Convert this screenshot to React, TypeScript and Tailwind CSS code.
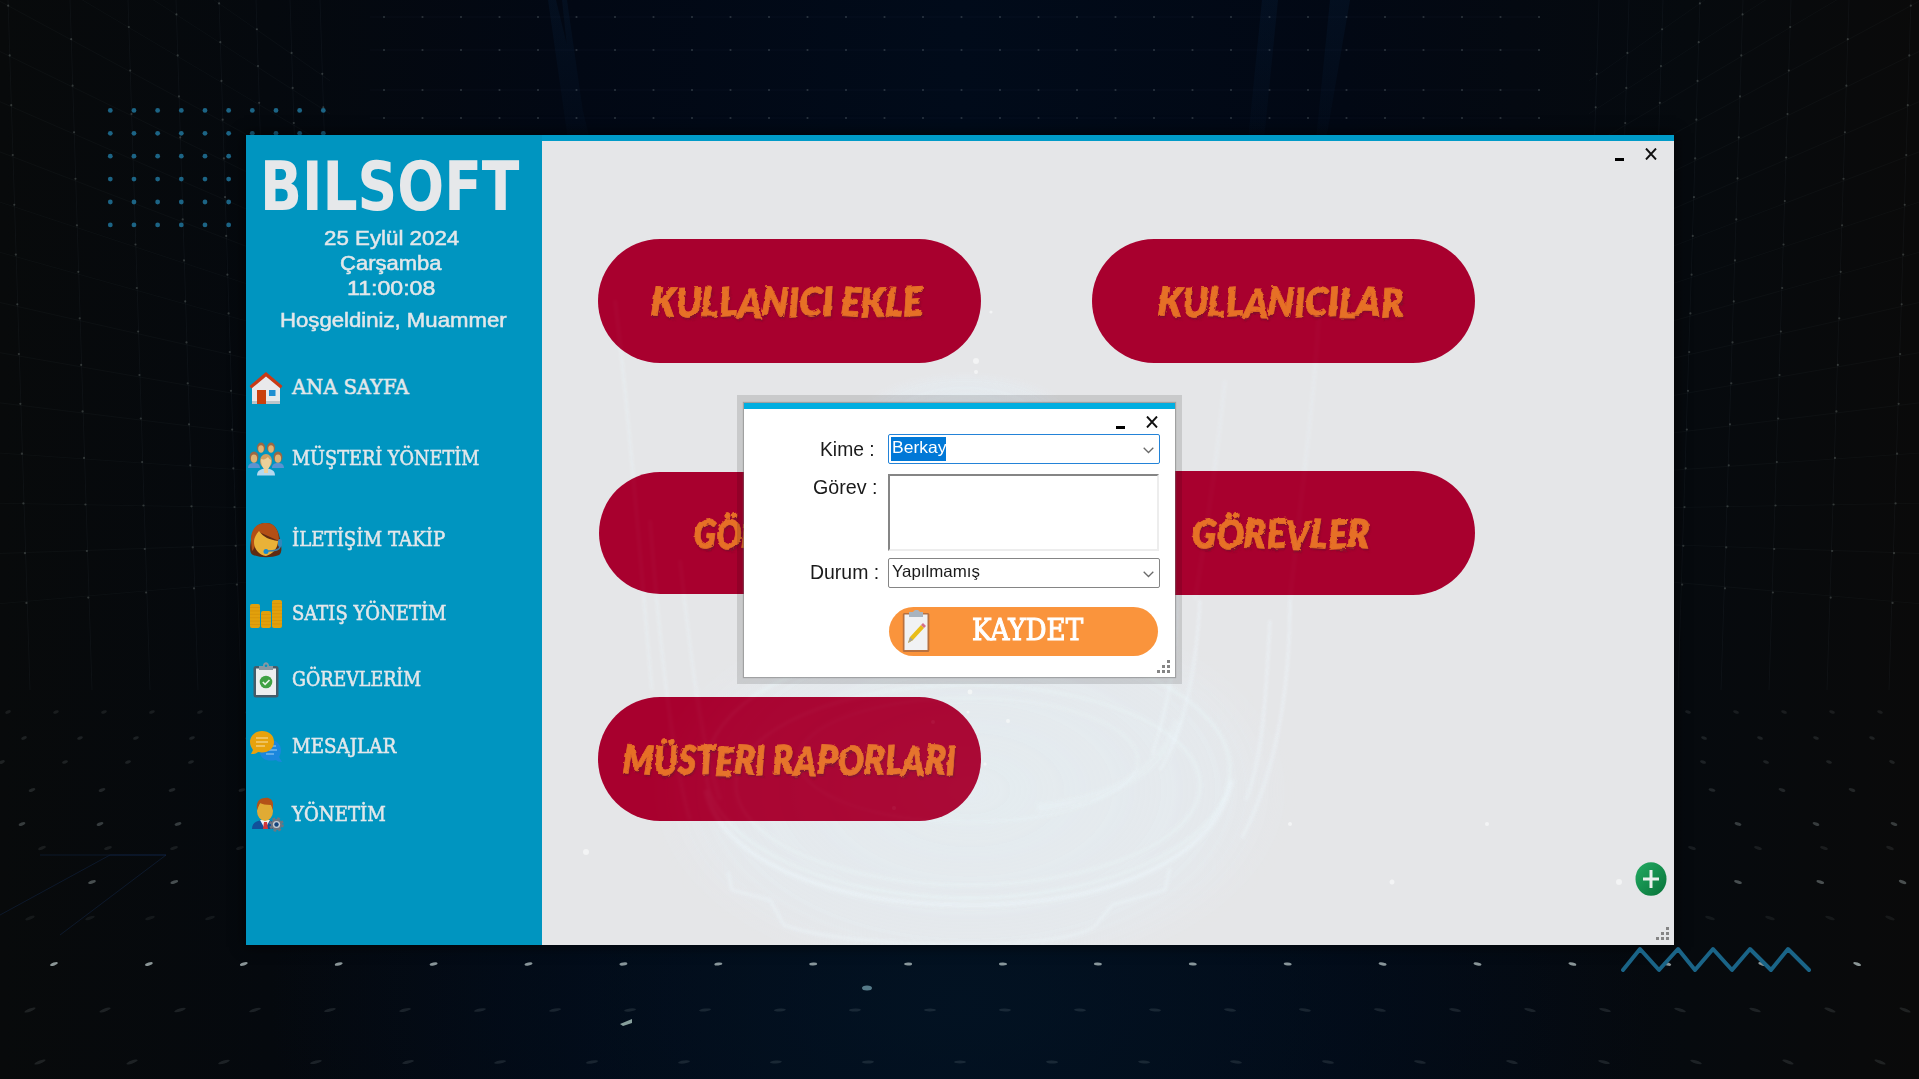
import React, { useLayoutEffect, useRef, useState } from "react";

const range = (n: number) => Array.from({ length: n }, (_, i) => i);

/** Stretches a single line of text horizontally to a given width. */
function Fit({ width, className = "", children }: { width: number; className?: string; children: React.ReactNode }) {
  const ref = useRef<HTMLSpanElement>(null);
  const [scale, setScale] = useState(1);
  useLayoutEffect(() => {
    if (ref.current) setScale(width / ref.current.offsetWidth);
  }, [width]);
  return (
    <span className="block shrink-0" style={{ width }}>
      <span
        ref={ref}
        className={`inline-block origin-left align-top whitespace-nowrap ${className}`}
        style={{ transform: `scaleX(${scale})` }}
      >
        {children}
      </span>
    </span>
  );
}

/* ---------- backdrop ---------- */

const VX = 960;
const VY = 520;
const wallX = [8, 70, 128, 176, 219, 256, 290, 320];

function Wall() {
  return (
    <g>
      {wallX.map((x) => (
        <path key={x} d={`M${x} 0 L${x + 22} 690`} stroke="#8aa0a8" strokeOpacity=".06" />
      ))}
      {range(16).map((k) => {
        const y = -60 + k * 43.5;
        const at = (x: number) => y + ((x - 128) * (VY - y)) / (VX - 128);
        return (
          <g key={k}>
            <path d={`M0 ${at(0)} L330 ${at(330)}`} stroke="#8aa0a8" strokeOpacity=".045" />
            {wallX.map((x) => {
              const yy = at(x);
              return <circle key={x} cx={x + (22 * yy) / 720} cy={yy} r="1.1" fill="#b8c4bc" fillOpacity=".24" />;
            })}
          </g>
        );
      })}
    </g>
  );
}

const floorRows = [
  { y: 712, x: 8, step: 48, r: 3, o: 0.1 },
  { y: 738, x: 24, step: 56, r: 3, o: 0.12 },
  { y: 762, x: 2, step: 63, r: 3, o: 0.12 },
  { y: 790, x: 32, step: 70, r: 3.5, o: 0.14 },
  { y: 824, x: 22, step: 78, r: 3.5, o: 0.25 },
  { y: 848, x: 42, step: 66, r: 4, o: 0.1 },
  { y: 882, x: 92, step: 82.3, r: 4, o: 0.35 },
  { y: 918, x: 30, step: 60, r: 5, o: 0.08 },
  { y: 964, x: 54, step: 94.9, r: 4, o: 0.7 },
  { y: 1010, x: 30, step: 75, r: 6, o: 0.12 },
  { y: 1062, x: 40, step: 92, r: 6, o: 0.12 },
];

function FloorSpecks() {
  return (
    <g>
      {floorRows.map((row) =>
        range(42).map((i) => {
          const x = row.x + i * row.step;
          if (x > 1919) return null;
          const tilt = ((960 - x) / 960) * -22;
          return (
            <ellipse
              key={`${row.y}-${i}`}
              cx={x}
              cy={row.y}
              rx={row.r}
              ry="1.5"
              fill="#c3d2d2"
              fillOpacity={row.o}
              transform={`rotate(${tilt} ${x} ${row.y})`}
            />
          );
        }),
      )}
    </g>
  );
}

function Backdrop() {
  return (
    <svg className="absolute inset-0" width="1919" height="1079" viewBox="0 0 1919 1079">
      <defs>
        <linearGradient id="base" x1="0" x2="1">
          <stop offset="0" stopColor="#080a0b" />
          <stop offset=".14" stopColor="#05090e" />
          <stop offset=".3" stopColor="#020814" />
          <stop offset=".5" stopColor="#010b1a" />
          <stop offset=".7" stopColor="#020814" />
          <stop offset=".88" stopColor="#060a0e" />
          <stop offset="1" stopColor="#0a0a0a" />
        </linearGradient>
        <radialGradient id="floor" cx=".5" cy=".93" r=".36">
          <stop offset="0" stopColor="#031424" stopOpacity=".8" />
          <stop offset="1" stopColor="#031424" stopOpacity="0" />
        </radialGradient>
        <linearGradient id="beam" x1="0" y1="0" x2="0" y2="1">
          <stop offset="0" stopColor="#0b2f55" stopOpacity=".18" />
          <stop offset="1" stopColor="#0b2f55" stopOpacity=".06" />
        </linearGradient>
      </defs>
      <rect width="1919" height="1079" fill="url(#base)" />
      <rect width="1919" height="1079" fill="url(#floor)" />
      <path d="M548 0h8l34 140h-22z M562 0h5l20 140h-10z M1262 0h16l-14 140h-16z M1330 0h20l-24 140h-10z" fill="url(#beam)" />
      <Wall />
      <g transform="translate(1919 0) scale(-1 1)">
        <Wall />
      </g>
      <g>
        {[17, 50, 90, 118].map((y) => (
          <g key={y}>
            <path d={`M370 ${y}H1540`} stroke="#6f8c9c" strokeOpacity=".05" />
            {range(31).map((i) => (
              <circle key={i} cx={384 + i * 38.5} cy={y} r="1.1" fill="#b8c8c8" fillOpacity=".22" />
            ))}
          </g>
        ))}
      </g>
      <FloorSpecks />
      <path d="M0 915 L110 855 H166 M40 855 H166 L60 935" fill="none" stroke="#16305a" strokeOpacity=".4" />
      <ellipse cx="867" cy="988" rx="5" ry="2.5" fill="#79a7b5" fillOpacity=".7" />
      <path d="M620 1024 l12 -5 v4 l-9 3z" fill="#a9c4bd" fillOpacity=".8" />
      <g fill="#1c6485">
        {range(6).map((r) => range(10).map((c) => <circle key={`${r}-${c}`} cx={110.3 + c * 23.67} cy={110.4 + r * 22.9} r="2.4" />))}
      </g>
    </svg>
  );
}

/** Pale glass-like vortex of the main pane, in the pane's own 1132x804 space. */
function Vortex({ className }: { className: string }) {
  return (
    <svg className={`pointer-events-none absolute inset-0 ${className}`} width="1132" height="804" viewBox="542 141 1132 804">
      <defs>
        <radialGradient id="haze">
          <stop offset="0" stopColor="#e4f6fd" stopOpacity=".4" />
          <stop offset=".75" stopColor="#e4f6fd" stopOpacity=".22" />
          <stop offset="1" stopColor="#e4f6fd" stopOpacity="0" />
        </radialGradient>
        <filter id="soft">
          <feGaussianBlur stdDeviation="1.4" />
        </filter>
      </defs>
      <ellipse cx="970" cy="790" rx="330" ry="200" fill="url(#haze)" />
      <ellipse cx="965" cy="415" rx="110" ry="45" fill="url(#haze)" />
      <g filter="url(#soft)" fill="none" stroke="#effbff">
        <ellipse cx="968" cy="770" rx="262" ry="128" strokeWidth="3" strokeOpacity=".35" />
        <ellipse cx="968" cy="785" rx="232" ry="100" strokeWidth="3" strokeOpacity=".3" />
        <ellipse cx="968" cy="760" rx="170" ry="62" strokeWidth="2" strokeOpacity=".3" />
        <path d="M706 790 C720 860 830 905 968 905 C1110 905 1215 860 1232 780" strokeWidth="5" strokeOpacity=".4" />
        <path d="M728 872 L732 890 L770 900 L784 925 C850 950 1070 952 1096 925 L1112 905 L1165 890 L1170 868" strokeWidth="3" strokeOpacity=".4" />
        <path d="M1037 808 C1110 800 1165 770 1178 720" strokeWidth="9" strokeOpacity=".2" />
        <path d="M1178 590 C1176 660 1170 700 1152 755 M1200 600 C1196 680 1180 740 1160 770 M1290 600 C1290 700 1272 780 1242 838 M1270 620 C1266 700 1262 760 1246 800" strokeWidth="3" strokeOpacity=".4" />
        <path d="M650 520 C660 650 672 760 690 820 M680 560 C690 650 700 740 720 800 M615 300 C630 420 640 560 652 690" strokeWidth="4" strokeOpacity=".22" />
        <path d="M1225 380 C1218 450 1205 540 1195 600 M1320 280 C1318 380 1300 500 1290 600" strokeWidth="5" strokeOpacity=".16" />
      </g>
      <g fill="#fff">
        {[[976, 361, 3], [976, 372, 2], [991, 312, 1.6], [905, 312, 1.6], [970, 692, 2.4], [933, 722, 2], [968, 712, 1.5], [1008, 721, 2], [894, 808, 2], [985, 764, 1.6], [586, 852, 3], [1619, 882, 3], [1392, 882, 2.5], [1487, 824, 2], [1290, 824, 2]].map(([x, y, r]) => (
          <circle key={`${x}-${y}`} cx={x} cy={y} r={r} fillOpacity=".55" />
        ))}
      </g>
    </svg>
  );
}

/* ---------- sidebar icons ---------- */

const HouseIcon = () => (
  <svg width="34" height="34" viewBox="0 0 34 34">
    <path d="M17 3 L31 16 V33 H3 V16z" fill="#e9e9eb" />
    <path d="M3 30h28v3H3z" fill="#bcc5ca" />
    <path d="M17 1 L33.500 15 L31.500 17.500 L17 5.500 L2.500 17.500 L.5 15z" fill="#c93a16" />
    <rect x="8" y="19" width="9" height="14" fill="#ca410d" />
    <rect x="20" y="19" width="6.500" height="6" fill="#218fd1" />
  </svg>
);

const Head = ({ x, y, s = 1 }: { x: number; y: number; s?: number }) => (
  <g transform={`translate(${x} ${y}) scale(${s})`}>
    <ellipse cy="0" rx="4" ry="5" fill="#9a6844" />
    <ellipse cy="1.500" rx="2.800" ry="3.700" fill="#e0b374" />
  </g>
);

const PeopleIcon = () => (
  <svg width="36" height="34" viewBox="0 0 36 34">
    <Head x={13} y={5.500} />
    <Head x={23} y={5.500} />
    <path d="M0 26c0-4 3-5 6-5s6 1 6 5z M24 26c0-4 3-5 6-5s6 1 6 5z" fill="#5a93d2" />
    <Head x={6} y={15} s={1.100} />
    <Head x={30} y={15} s={1.100} />
    <path d="M9 33.500c0-5 4-7 9-7s9 2 9 7z" fill="#b5d8ee" />
    <ellipse cx="18" cy="19" rx="6" ry="7" fill="#cf9f61" />
    <path d="M13 17c3 1 5 0 7-2 1 2 2 2 3 3 0 5-2 8-3 9v4h-4v-4c-2-2-3-5-3-10z" fill="#ecd09a" />
  </svg>
);

const AgentIcon = () => (
  <svg width="34" height="36" viewBox="0 0 34 36">
    <path d="M17 1C7 1 3 9 2 18 1 25 0 31 4 33c8 3 18 3 26 0 4-3 2-10 1-16C29 7 25 1 17 1z" fill="#5f2b12" />
    <path d="M17 1C6 1 2 9 2 18l1 11c4-3 4-14 7-19l20 9C30 8 26 1 17 1z" fill="#b34f16" />
    <path d="M10 9c4 6 11 9 19 10 0 7-5 13-12 15C10 33 5 27 5 20c0-4 2-8 5-11z" fill="#e9b238" />
    <path d="M31 17v8q-1 4-12 4" fill="none" stroke="#3e7fa7" strokeWidth="1.500" />
    <rect x="29" y="17" width="4" height="8" rx="2" fill="#3188bc" />
    <circle cx="17" cy="29.500" r="2.500" fill="#168bd0" />
  </svg>
);

const CoinsIcon = () => (
  <svg width="34" height="30" viewBox="0 0 34 30">
    {[[1, 5, 24], [12, 12, 17], [23, 1, 28]].map(([x, y, h]) => (
      <g key={x}>
        <rect x={x} y={y} width="10" height={h} rx="2" fill="#e2a00c" />
        {range(Math.floor(h / 3.4) - 1).map((i) => (
          <path key={i} d={`M${x} ${y + 3.5 + i * 3.4}h10`} stroke="#cf8a09" strokeWidth=".5" />
        ))}
      </g>
    ))}
  </svg>
);

const TasksIcon = () => (
  <svg width="34" height="36" viewBox="0 0 34 36">
    <rect x="4.500" y="4" width="25" height="31.500" rx="2.500" fill="#465b68" />
    <rect x="7" y="6.500" width="20" height="26.500" fill="#eceeef" />
    <path d="M10 4h4c0-5 6-5 6 0h4v4H10z" fill="#8898a2" />
    <circle cx="17" cy="3.800" r="1.300" fill="#0095c0" />
    <circle cx="17" cy="20" r="6.300" fill="#3fa143" />
    <path d="M13.800 20l2.300 2.300 4.400-4.300" fill="none" stroke="#e9f5e9" strokeWidth="1.600" />
  </svg>
);

const ChatIcon = () => (
  <svg width="34" height="34" viewBox="0 0 34 34">
    <path d="M21 10c7 0 11 5 11 10 0 3-1 5-2 7l3 5c-3 0-5-1-6-2-9 2-15-1-16-7z" fill="#1b87dd" />
    <path d="M21 16h6M20 20h8M17 24h8" stroke="#9fd0f3" strokeWidth="1.200" />
    <path d="M13 1C6 1 1 6 1 12c0 4 2 6 3 8l-2 4c3 0 5 0 7-2 9 2 16-3 16-10C25 5 20 1 13 1z" fill="#e7a20c" />
    <path d="M7 8h12M7 12h12M7 16h9" stroke="#f8e2ae" strokeWidth="1.200" />
  </svg>
);

const ManagerIcon = () => (
  <svg width="36" height="36" viewBox="0 0 36 36">
    <path d="M4 32c0-7 6-9 13-9s12 2 12 9z" fill="#11509a" />
    <path d="M12 23h10l-5 9z" fill="#eef2f5" />
    <path d="M16 25h3l1 7h-5z" fill="#d3373b" />
    <ellipse cx="17" cy="14" rx="8" ry="10" fill="#e0ab34" />
    <path d="M9 13C8 5 11 1 17 1c3-1 8 1 8 6v6l-2-5c-5 0-9-1-11-2z" fill="#b35218" />
    <circle cx="28.500" cy="27.500" r="5.600" fill="#6d7681" />
    <circle cx="28.500" cy="27.500" r="6.200" fill="none" stroke="#6d7681" strokeWidth="2.200" strokeDasharray="2.700 2.170" />
    <circle cx="28.500" cy="27.500" r="3.600" fill="#c8ced6" />
    <circle cx="28.500" cy="27.500" r="2.200" fill="#15457c" />
  </svg>
);

const menu = [
  { label: "ANA SAYFA", width: 117, gap: "mt-0", Icon: HouseIcon },
  { label: "MÜŞTERİ YÖNETİM", width: 187, gap: "mt-[35px]", Icon: PeopleIcon },
  { label: "İLETİŞİM TAKİP", width: 153, gap: "mt-[45px]", Icon: AgentIcon },
  { label: "SATIŞ YÖNETİM", width: 154, gap: "mt-[38px]", Icon: CoinsIcon },
  { label: "GÖREVLERİM", width: 129, gap: "mt-[30px]", Icon: TasksIcon },
  { label: "MESAJLAR", width: 104, gap: "mt-[31px]", Icon: ChatIcon },
  { label: "YÖNETİM", width: 94, gap: "mt-[32px]", Icon: ManagerIcon },
];

function Sidebar() {
  return (
    <aside className="flex w-[296px] shrink-0 flex-col bg-[#0095c0] text-[#e2e7ea]">
      <div className="ml-[14px] mt-[16px] h-[70px]">
        <Fit width={259} className="font-['DejaVu_Sans'] text-[68.5px] leading-[70px] font-bold text-[#e6e8ea]">
          BILSOFT
        </Fit>
      </div>
      <div className="ml-[-6px] mt-[4px] flex flex-col items-center font-['Liberation_Sans'] text-[20.5px] leading-[25px] [-webkit-text-stroke:0.5px_#e2e7ea]">
        <Fit width={135}>25 Eylül 2024</Fit>
        <Fit width={102}>Çarşamba</Fit>
        <Fit width={88}>11:00:08</Fit>
        <div className="ml-[4px] mt-[7px]">
          <Fit width={227}>Hoşgeldiniz, Muammer</Fit>
        </div>
      </div>
      <nav className="mt-[38px]">
        {menu.map(({ label, width, gap, Icon }) => (
          <div key={label} className={`flex h-9 items-center pl-[2px] ${gap}`}>
            <div className="flex w-9 shrink-0 justify-center">
              <Icon />
            </div>
            <div className="ml-[8px]">
              <Fit width={width} className="font-['DejaVu_Serif'] text-[19.5px] leading-9 [-webkit-text-stroke:0.55px_#e2e7ea]">
                {label}
              </Fit>
            </div>
          </div>
        ))}
      </nav>
    </aside>
  );
}

/* ---------- main pane ---------- */

function BrushButton({ label, width, size = "h-[124px]", shift = "pr-[5px]" }: { label: string; width: number; size?: string; shift?: string }) {
  return (
    <button className={`flex w-[383px] items-center justify-center rounded-full bg-[#a8002e] ${size} ${shift}`}>
      <Fit
        width={width}
        className="font-['Lato'] text-[40px] leading-[46px] font-extrabold text-[#e66f26] italic [-webkit-text-stroke:0.8px_#e66f26] [filter:url(#rough)] [text-shadow:1px_2px_2px_#7d102c]"
      >
        {label.split("").map((ch, i) => (
          <span
            key={i}
            className={`inline-block whitespace-pre ${["rotate-3", "-rotate-2 translate-y-px", "rotate-2", "-rotate-3", "rotate-1 translate-y-0.5"][i % 5]}`}
          >
            {ch}
          </span>
        ))}
      </Fit>
    </button>
  );
}

function WindowButtons() {
  return (
    <div className="flex items-end gap-[21px]">
      <span className="h-[3px] w-[9px] bg-black" />
      <svg className="mb-px" width="12" height="12" viewBox="0 0 12 12">
        <path d="M1 .5 L11 11.500 M11 .5 L1 11.500" stroke="#101010" strokeWidth="1.900" />
      </svg>
    </div>
  );
}

const Grip = () => (
  <svg width="13" height="13" viewBox="0 0 13 13" fill="#858585">
    <path d="M10 0h3v3h-3z M5 5h3v3H5z M10 5h3v3h-3z M0 10h3v3H0z M5 10h3v3H5z M10 10h3v3h-3z" />
  </svg>
);

function MainPane() {
  return (
    <main className="relative flex flex-1 flex-col bg-[#e5e6e8]">
      <Vortex className="opacity-90" />
      <div className="relative flex h-[20px] items-end justify-end pr-[17px]">
        <WindowButtons />
      </div>
      <div className="relative ml-[56px] mt-[78px] grid grid-cols-[383px_383px] gap-x-[111px]">
        <div className="h-[232px]">
          <BrushButton label="KULLANICI EKLE" width={272} />
        </div>
        <div className="h-[232px]">
          <BrushButton label="KULLANICILAR" width={246} />
        </div>
        <div className="h-[226px] pl-px pt-px">
          <BrushButton label="GÖREV EKLE" width={188} size="h-[122px]" />
        </div>
        <div className="h-[226px]">
          <BrushButton label="GÖREVLER" width={178} />
        </div>
        <BrushButton label="MÜSTERI RAPORLARI" width={333} shift="pr-px" />
      </div>
      <div className="relative mt-auto flex flex-col items-end pb-[5px]">
        <svg className="mr-[7px]" width="32" height="34" viewBox="0 0 32 34">
          <defs>
            <linearGradient id="plus" x2="1" y2="1">
              <stop offset="0" stopColor="#23ab63" />
              <stop offset="1" stopColor="#077238" />
            </linearGradient>
          </defs>
          <ellipse cx="16" cy="17" rx="15.500" ry="16.800" fill="url(#plus)" />
          <path d="M16 8v18M8 17h16" stroke="#e9efec" strokeWidth="3" />
        </svg>
        <div className="mr-[5px] mt-[31px]">
          <Grip />
        </div>
      </div>
      <Vortex className="opacity-10" />
    </main>
  );
}

/* ---------- task dialog ---------- */

function Field({ label, width, pr, className, lift = "", children }: { label: string; width: number; pr: string; className: string; lift?: string; children: React.ReactNode }) {
  return (
    <div className={`flex ${className}`}>
      <div className={`flex w-[144px] shrink-0 justify-end ${pr} ${lift}`}>
        <Fit width={width} className="text-[20px] leading-[30px]">
          {label}
        </Fit>
      </div>
      {children}
    </div>
  );
}

const Chevron = () => (
  <svg className="mr-[5px] mt-[3px]" width="11" height="7" viewBox="0 0 11 7">
    <path d="M.7 .8 L5.500 5.500 L10.300 .8" fill="none" stroke="#6a6a6a" strokeWidth="1.300" />
  </svg>
);

function Dialog() {
  return (
    <div className="absolute left-[737px] top-[395px] h-[289px] w-[445px] bg-black/12 p-[7px] pt-[8px]">
      <div className="flex h-[274px] w-[431px] flex-col border-t-[6px] border-[#00aee0] bg-white font-['Liberation_Sans'] text-[#1a1a1a] shadow-[0_0_1px_1px_rgba(110,110,110,0.45)]">
        <div className="flex h-[20px] items-end justify-end pr-[17px]">
          <WindowButtons />
        </div>
        <Field label="Kime :" width={55} pr="pr-[13px]" className="mt-[5px] h-[30px]">
          <div className="flex h-[30px] w-[272px] items-center justify-between rounded-[2px] border-[1.5px] border-[#2383d8] pl-[2px]">
            <span className="bg-[#0078d7] text-white">
              <Fit width={55} className="pl-px text-[16.5px] leading-[20px]">
                Berkay
              </Fit>
            </span>
            <Chevron />
          </div>
        </Field>
        <Field label="Görev :" width={65} pr="pr-[10px]" className="mt-[10px] h-[77px]" lift="-mt-[2px]">
          <div className="h-[77px] w-[271px] border-2 border-t-[#858585] border-r-[#ededed] border-b-[#ededed] border-l-[#858585]" />
        </Field>
        <Field label="Durum :" width={69} pr="pr-[9px]" className="mt-[7px] h-[30px]" lift="-mt-px">
          <div className="flex h-[30px] w-[272px] items-center justify-between rounded-[2px] border border-[#858585] pl-[3px]">
            <span>
              <Fit width={88} className="text-[16.5px] leading-[20px]">
                Yapılmamış
              </Fit>
            </span>
            <Chevron />
          </div>
        </Field>
        <button className="ml-[145px] mt-[19px] flex h-[49px] w-[269px] shrink-0 items-center rounded-full bg-[#fa943c] text-white">
          <svg className="ml-[13px]" width="28" height="43" viewBox="0 0 28 43">
            <rect x=".8" y="3" width="26.500" height="39" rx="1.500" fill="#b8713f" />
            <rect x="2.500" y="4.500" width="23" height="35.500" fill="#f1f2f4" />
            <path d="M7 2h4c2-3 5-3 7 0h3v5H7z" fill="#a9b4bf" />
            <path d="M6 33l2-6 11-12 3 3-11 12z" fill="#e9bd18" />
            <path d="M6 33l2-6 3 3z" fill="#a8a28f" />
            <path d="M19 15l2-2 3 3-2 2z" fill="#d6708a" />
          </svg>
          <div className="mb-[4px] ml-[42px]">
            <Fit width={111} className="font-['DejaVu_Serif'] text-[29px] leading-[34px] [-webkit-text-stroke:1.1px_#fff]">
              KAYDET
            </Fit>
          </div>
        </button>
        <div className="mr-[5px] mt-[4px] self-end">
          <Grip />
        </div>
      </div>
    </div>
  );
}

export default function App() {
  return (
    <div className="relative h-[1079px] w-[1919px] overflow-hidden bg-[#05090e]">
      <Backdrop />
      <svg className="absolute" width="0" height="0">
        <filter id="rough" x="-5%" y="-20%" width="110%" height="140%">
          <feTurbulence type="fractalNoise" baseFrequency="0.12 0.2" numOctaves="2" seed="4" result="n" />
          <feDisplacementMap in="SourceGraphic" in2="n" scale="3.5" />
        </filter>
      </svg>
      <div className="relative ml-[246px] mt-[135px] flex h-[810px] w-[1428px] shadow-[0_0_12px_2px_rgba(0,0,0,0.6)]">
        <Sidebar />
        <div className="flex flex-1 flex-col border-t-[6px] border-[#009bc8]">
          <MainPane />
        </div>
      </div>
      <svg className="absolute left-[1619px] top-[945px]" width="194" height="30" viewBox="1619 945 194 30">
        <path
          d="M1623 970 L1640 949 L1659 970 L1678 949 L1695 970 L1713 949 L1732 970 L1750 949 L1771 970 L1788 949 L1809 970"
          fill="none"
          stroke="#1a6487"
          strokeWidth="4"
          strokeLinecap="round"
          strokeLinejoin="round"
        />
      </svg>
      <Dialog />
    </div>
  );
}
